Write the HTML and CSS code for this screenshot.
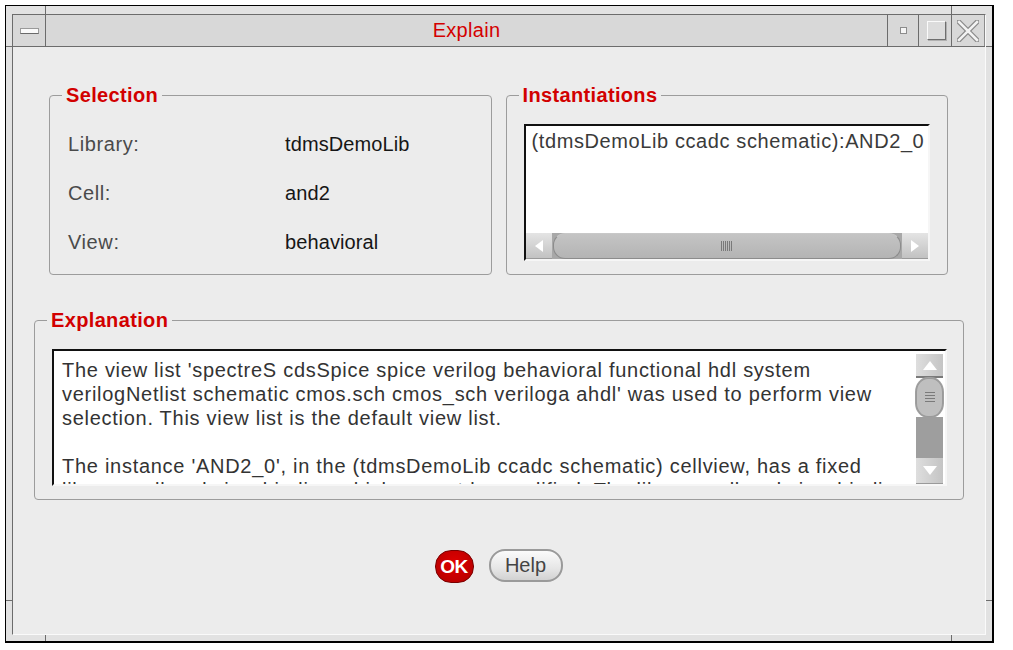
FILE: index.html
```html
<!DOCTYPE html>
<html>
<head>
<meta charset="utf-8">
<title>Explain</title>
<link rel="stylesheet" href="styles.css">
</head>
<body>
<div class="window">
  <span class="tick tick-t1"></span><span class="tick tick-t2"></span>
  <span class="tick tick-b1"></span><span class="tick tick-b2"></span>
  <span class="tick tick-l1"></span><span class="tick tick-l2"></span>
  <span class="tick tick-r1"></span><span class="tick tick-r2"></span>
  <div class="frame">
    <div class="titlebar">
      <div class="tb-btn tb-menu"><span class="menu-bar"></span></div>
      <div class="title">Explain</div>
      <div class="tb-btn tb-min"><span class="min-sq"></span></div>
      <div class="tb-btn tb-max"><span class="max-sq"></span></div>
      <div class="tb-btn tb-close">
        <svg width="22" height="22" viewBox="0 0 22 22">
          <path d="M2 2 L20 20 M20 2 L2 20" stroke="#8a8a8a" stroke-width="5" stroke-linecap="square" fill="none"/>
          <path d="M2 2 L20 20 M20 2 L2 20" stroke="#f2f2f2" stroke-width="2.5" stroke-linecap="square" fill="none"/>
        </svg>
      </div>
    </div>
    <div class="content">
      <div class="top-row">
        <fieldset class="group sel">
          <legend>Selection</legend>
          <div class="sel-body">
            <span class="lbl">Library:</span><span class="val">tdmsDemoLib</span>
            <span class="lbl">Cell:</span><span class="val">and2</span>
            <span class="lbl">View:</span><span class="val">behavioral</span>
          </div>
        </fieldset>
        <fieldset class="group inst">
          <legend>Instantiations</legend>
          <div class="listbox">
            <div class="list-text">(tdmsDemoLib ccadc schematic):AND2_0</div>
            <div class="hscroll">
              <div class="arrow"><svg width="10" height="12" viewBox="0 0 10 12"><path d="M9 0 L1 6 L9 12Z" fill="#fff"/></svg></div>
              <div class="htrack"><div class="hthumb"><span class="hgrip"></span></div></div>
              <div class="arrow"><svg width="10" height="12" viewBox="0 0 10 12"><path d="M1 0 L9 6 L1 12Z" fill="#fff"/></svg></div>
            </div>
          </div>
        </fieldset>
      </div>
      <fieldset class="group expl">
        <legend>Explanation</legend>
        <div class="textarea">
          <div class="text">The view list 'spectreS cdsSpice spice verilog behavioral functional hdl system<br>verilogNetlist schematic cmos.sch cmos_sch veriloga ahdl' was used to perform view<br>selection. This view list is the default view list.<br><br>The instance 'AND2_0', in the (tdmsDemoLib ccadc schematic) cellview, has a fixed<br>library, cell and view binding which cannot be modified. The library, cell and view binding</div>
          <div class="vscroll">
            <div class="varrow up"><svg width="14" height="9" viewBox="0 0 14 9"><path d="M7 0 L14 9 L0 9Z" fill="#fff"/></svg></div>
            <div class="vthumb"><span class="vgrip"></span></div>
            <div class="vtrough"></div>
            <div class="varrow down"><svg width="14" height="9" viewBox="0 0 14 9"><path d="M0 0 L14 0 L7 9Z" fill="#fff"/></svg></div>
          </div>
        </div>
      </fieldset>
      <div class="buttons">
        <div class="btn-ok">OK</div>
        <div class="btn-help">Help</div>
      </div>
    </div>
  </div>
</div>
</body>
</html>
```
FILE: styles.css
```css
body {
  margin: 0;
  background: #fff;
  font-family: "Liberation Sans", Arial, sans-serif;
}

.window {
  position: relative;
  box-sizing: border-box;
  width: 989px;
  height: 638px;
  margin: 5px 0 0 5px;
  border: 1px solid #000;
  border-right-width: 2px;
  border-bottom-width: 2px;
  background: #e2e2e2;
  padding: 8px 6px 6px 6px;
}

.tick {
  position: absolute;
  background: #6c6c6c;
}
.tick-t1 { left: 39px; top: 0; width: 1px; height: 8px; }
.tick-t2 { left: 945px; top: 0; width: 1px; height: 8px; }
.tick-b1 { left: 39px; bottom: 0; width: 1px; height: 6px; }
.tick-b2 { left: 945px; bottom: 0; width: 1px; height: 6px; }
.tick-l1 { left: 0; top: 40px; width: 6px; height: 1px; }
.tick-l2 { left: 0; top: 594px; width: 6px; height: 1px; }
.tick-r1 { right: 0; top: 40px; width: 6px; height: 1px; }
.tick-r2 { right: 0; top: 594px; width: 6px; height: 1px; }

.frame {
  box-sizing: border-box;
  height: 100%;
  border: 1px solid;
  border-color: #6c6c6c #fafafa #fafafa #6c6c6c;
  display: flex;
  flex-direction: column;
  background: #ececec;
}

.titlebar {
  display: flex;
  height: 32px;
  box-sizing: border-box;
  border-bottom: 1px solid #6c6c6c;
  background: #d8d8d8;
}

.tb-btn {
  box-sizing: border-box;
  display: flex;
  align-items: center;
  justify-content: center;
}
.tb-menu { width: 33px; border-right: 1px solid #6c6c6c; }
.tb-min { width: 31px; border-left: 1px solid #6c6c6c; }
.tb-max { width: 33px; border-left: 1px solid #6c6c6c; }
.tb-close { width: 34px; border-left: 1px solid #6c6c6c; border-right: 1px solid #8a8a8a; }

.menu-bar {
  display: block;
  width: 19px;
  height: 6px;
  box-sizing: border-box;
  background: #fafafa;
  border: 1px solid #9a9a9a;
  border-bottom-color: #6a6a6a;
}
.min-sq {
  display: block;
  width: 7px;
  height: 7px;
  box-sizing: border-box;
  background: #f6f6f6;
  border: 1px solid #8c8c8c;
}
.max-sq {
  display: block;
  width: 19px;
  height: 19px;
  box-sizing: border-box;
  margin-left: 2px;
  background: #dcdcdc;
  border: 1px solid;
  border-color: #fafafa #6e6e6e #6e6e6e #fafafa;
  box-shadow: 1px 1px 0 #b0b0b0;
}

.title {
  flex: 1;
  text-align: center;
  color: #d40000;
  font-size: 20px;
  line-height: 31px;
  letter-spacing: 0.3px;
}

.content {
  flex: 1;
  padding: 38px 37px 0 36px;
  display: flex;
  flex-direction: column;
}

.top-row {
  display: flex;
  gap: 14px;
}

.group {
  margin: 0;
  padding: 0;
  border: 1px solid #9c9c9c;
  border-radius: 4px;
  box-sizing: border-box;
  height: 190px;
  min-width: 0;
}
.top-row .group { flex: 1; }

.group legend {
  padding: 0 4px;
  margin-left: 12px;
  font-size: 20px;
  font-weight: bold;
  line-height: 20px;
  color: #d20000;
  letter-spacing: 0.35px;
}

.sel-body {
  display: grid;
  grid-template-columns: 217px auto;
  row-gap: 25px;
  padding: 27px 0 0 18px;
  font-size: 20px;
  line-height: 24px;
}
.lbl { color: #4a4a4a; letter-spacing: 0.6px; }
.val { color: #161616; letter-spacing: 0.1px; }

.listbox {
  box-sizing: border-box;
  margin: 19px 0 0 17px;
  width: 406px;
  height: 137px;
  border: 2px solid;
  border-color: #111 #f6f6f6 #f6f6f6 #111;
  background: #fff;
  display: flex;
  flex-direction: column;
}
.list-text {
  flex: 1;
  padding: 3px 0 0 6px;
  font-size: 20px;
  line-height: 24px;
  color: #3a3a3a;
  letter-spacing: 0.6px;
  white-space: nowrap;
  overflow: hidden;
}

.hscroll {
  height: 26px;
  display: flex;
}
.arrow {
  width: 26px;
  display: flex;
  align-items: center;
  justify-content: center;
  background: linear-gradient(#e4e4e4, #c2c2c2);
  border-bottom: 1px solid #9a9a9a;
  box-sizing: border-box;
}
.htrack {
  flex: 1;
  background: #a8a8a8;
  display: flex;
  padding: 0 1px;
}
.hthumb {
  flex: 1;
  box-sizing: border-box;
  border: 1px solid #8c8c8c;
  border-top-color: #c8c8c8;
  border-radius: 12px;
  background: linear-gradient(#c4c4c4, #b4b4b4);
  display: flex;
  align-items: center;
  justify-content: center;
}
.hgrip {
  display: block;
  width: 11px;
  height: 10px;
  background: repeating-linear-gradient(90deg, #7a7a7a 0 1px, transparent 1px 2px);
}

.expl {
  margin: 35px -16px 0 -15px;
}

.textarea {
  box-sizing: border-box;
  margin: 19px 0 0 17px;
  width: 895px;
  height: 137px;
  border: 2px solid;
  border-color: #111 #f6f6f6 #f6f6f6 #111;
  background: #fff;
  display: flex;
  padding: 3px 2px 0 0;
}
.text {
  flex: 1;
  padding: 4px 0 0 8px;
  font-size: 20px;
  line-height: 24px;
  color: #333;
  letter-spacing: 0.72px;
  white-space: nowrap;
  overflow: hidden;
}

.vscroll {
  width: 27px;
  display: flex;
  flex-direction: column;
}
.varrow {
  display: flex;
  align-items: center;
  justify-content: center;
  background: linear-gradient(90deg, #dedede, #c4c4c4);
  box-sizing: border-box;
}
.varrow.up { height: 24px; border-bottom: 2px solid #7a7a7a; }
.varrow.down { height: 26px; border-bottom: 1px solid #9a9a9a; }
.vthumb {
  height: 39px;
  box-sizing: border-box;
  background: #bfbfbf;
  border: 1px solid #9a9a9a;
  border-radius: 12px / 14px;
  display: flex;
  align-items: center;
  justify-content: center;
  box-shadow: 0 0 0 1px #a0a0a0;
}
.vgrip {
  display: block;
  width: 10px;
  height: 11px;
  background: repeating-linear-gradient(180deg, #7a7a7a 0 1px, transparent 1px 3px);
}
.vtrough {
  flex: 1;
  background: #9e9e9e;
}

.buttons {
  display: flex;
  justify-content: center;
  align-items: flex-start;
  gap: 15px;
  margin-top: 49px;
}
.btn-ok {
  box-sizing: border-box;
  margin-top: 1px;
  width: 39px;
  height: 33px;
  border-radius: 16px;
  border: 1px solid #7a0000;
  background: radial-gradient(ellipse at 50% 40%, #e00000, #b00000);
  color: #fff;
  font-weight: bold;
  font-size: 19px;
  line-height: 31px;
  text-align: center;
  letter-spacing: -0.5px;
}
.btn-help {
  box-sizing: border-box;
  width: 74px;
  height: 33px;
  border-radius: 16px;
  border: 2px solid #9a9a9a;
  background: linear-gradient(#fbfbfb, #e6e6e6 60%, #d2d2d2);
  color: #444;
  font-size: 20px;
  line-height: 29px;
  text-align: center;
}
```
